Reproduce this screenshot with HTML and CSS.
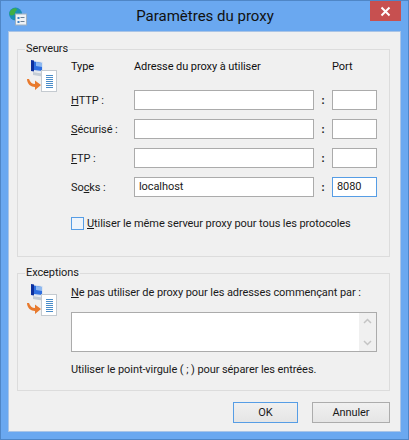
FILE: index.html
```html
<!DOCTYPE html>
<html lang="fr">
<head>
    <meta charset="UTF-8">
    <title>Paramètres du proxy</title>
    <link rel="stylesheet" href="styles.css">
</head>
<body>
<div class="window">
    <div class="titlebar">
        <svg class="app-icon" width="20" height="20" viewBox="0 0 20 20">
            <circle cx="7.5" cy="7" r="6.5" fill="#1c8fb5"/>
            <path d="M3 3c2-2 5-2 6-1 0 2-2 2-2 4s-3 3-5 2c-1-2 0-4 1-5zM9 9c2-1 4 0 4 1-1 2-3 3-4 3-1-1-1-3 0-4z" fill="#3fae45"/>
            <rect x="7.5" y="7" width="11" height="11" fill="#eef2f6" stroke="#9fb0c0"/>
            <path d="M9.5 10h2v2h-2zM9.5 14h2v2h-2z" fill="#3d7fc4"/>
            <path d="M12.500 10.500h4M12.500 14.500h4" stroke="#6b7f94"/>
        </svg>
        <div class="title">Paramètres du proxy</div>
        <div class="close">
            <svg width="11" height="11" viewBox="0 0 11 11"><path d="M1.500 1.500l8 8M9.500 1.500l-8 8" stroke="#fff" stroke-width="2"/></svg>
        </div>
    </div>
    <div class="client">
        <fieldset class="group servers">
            <legend>Serveurs</legend>
            <svg class="net-icon" width="32" height="32" viewBox="0 0 32 32">
                <use href="#net"/>
            </svg>
            <div class="proxy-grid">
                <div class="head">Type</div>
                <div class="head">Adresse du proxy à utiliser</div>
                <div></div>
                <div class="head">Port</div>

                <label><u>H</u>TTP :</label>
                <div class="field"></div>
                <span class="colon">:</span>
                <div class="field"></div>

                <label><u>S</u>écurisé :</label>
                <div class="field"></div>
                <span class="colon">:</span>
                <div class="field"></div>

                <label><u>F</u>TP :</label>
                <div class="field"></div>
                <span class="colon">:</span>
                <div class="field"></div>

                <label>So<u>c</u>ks :</label>
                <div class="field">localhost</div>
                <span class="colon">:</span>
                <div class="field active">8080</div>
            </div>
            <div class="check-row">
                <span class="checkbox"></span>
                <span><u>U</u>tiliser le même serveur proxy pour tous les protocoles</span>
            </div>
        </fieldset>

        <fieldset class="group exceptions">
            <legend>Exceptions</legend>
            <svg class="net-icon" width="32" height="32" viewBox="0 0 32 32">
                <defs>
                    <g id="net">
                        <path d="M5 0l12 2v11L5 11z" fill="#dfe6ee"/>
                        <path d="M5 0l3 .5v11L5 11z" fill="#0c2f9e"/>
                        <path d="M8 1.500l8 1.500v8l-8-1z" fill="#2f6fe0"/>
                        <path d="M10 2l6 1v4l-6-1z" fill="#8db8f0"/>
                        <path d="M7 12l9 1.500v3L7 15z" fill="#c3ccd6"/>
                        <rect x="15.500" y="10.500" width="15" height="21" fill="#fff" stroke="#c4cad0"/>
                        <path d="M20 15.500h7M20 17.500h7M20 19.500h7M20 21.500h7M20 23.500h7M20 25.500h7M20 27.500h7" stroke="#4a8cc8"/>
                        <path d="M1 19c0 5 4 8 8 8v3l6-5-6-4.500V24c-3 0-5-2-6-5z" fill="#e87a2e"/>
                    </g>
                </defs>
                <use href="#net"/>
            </svg>
            <div class="exceptions-body">
                <div class="note"><u>N</u>e pas utiliser de proxy pour les adresses commençant par :</div>
                <div class="textarea">
                    <div class="scrollbar">
                        <svg width="9" height="6" viewBox="0 0 9 6"><path d="M1 5l3.500-3.500L8 5" fill="none" stroke="#c4c4c4" stroke-width="1.500"/></svg>
                        <svg width="9" height="6" viewBox="0 0 9 6"><path d="M1 1l3.500 3.500L8 1" fill="none" stroke="#c4c4c4" stroke-width="1.500"/></svg>
                    </div>
                </div>
                <div class="note">Utiliser le point-virgule ( ; ) pour séparer les entrées.</div>
            </div>
        </fieldset>

        <div class="buttons">
            <div class="btn default">OK</div>
            <div class="btn">Annuler</div>
        </div>
    </div>
</div>
</body>
</html>
```

FILE: styles.css
```css
html, body {
    margin: 0;
    height: 100%;
}
body {
    font-family: Roboto, sans-serif;
    font-size: 11px;
    letter-spacing: -0.08px;
    color: #1a1a1a;
    background-color: #fff;
}
.window {
    box-sizing: border-box;
    width: 409px;
    height: 440px;
    padding: 0 7px 7px;
    display: flex;
    flex-direction: column;
    background-color: #6aa8f0;
    border: 1px solid #4f86c6;
}
.titlebar {
    height: 30px;
    flex: none;
    display: flex;
    align-items: flex-start;
}
.app-icon {
    margin-top: 6px;
    flex: none;
}
.title {
    flex: 1;
    text-align: center;
    font-size: 15px;
    letter-spacing: 0;
    line-height: 20px;
    margin-top: 5px;
    margin-left: 12px;
    color: #111;
}
.close {
    width: 31px;
    height: 20px;
    background-color: #c75050;
    display: flex;
    align-items: center;
    justify-content: center;
    flex: none;
}
.client {
    flex: 1;
    background-color: #f0f0f0;
    border: 1px solid #a9c4e6;
    padding: 9px 10px 0 8px;
    display: flex;
    flex-direction: column;
}
.group {
    margin: 0;
    padding: 0;
    border: 1px solid #dcdcdc;
    min-width: 0;
    display: flex;
    align-items: flex-start;
}
.group legend {
    margin-left: 7px;
    padding: 0 1px;
    line-height: 16px;
}
.servers {
    height: 214px;
    flex-wrap: wrap;
}
.exceptions {
    height: 124px;
    margin-top: 8px;
}
.net-icon {
    flex: none;
    margin: 3px 0 0 8px;
}
.proxy-grid {
    margin: 0 0 0 13px;
    display: grid;
    grid-template-columns: 63px 180px 18px 45px;
    grid-template-rows: 24px 20px 20px 20px 20px;
    row-gap: 9px;
    align-items: center;
}
.head {
    align-self: start;
    line-height: 20px;
    color: #111;
}
.field {
    box-sizing: border-box;
    height: 20px;
    background-color: #fff;
    border: 1px solid #ababab;
    padding-left: 4px;
    line-height: 18px;
}
.field.active {
    border-color: #569de5;
}
.colon {
    text-align: center;
    font-weight: bold;
}
.check-row {
    margin: 20px 0 0 53px;
    width: 100%;
    display: flex;
    align-items: center;
    gap: 3px;
}
.checkbox {
    box-sizing: border-box;
    width: 13px;
    height: 13px;
    background-color: #eef4fb;
    border: 1px solid #569de5;
}
.exceptions-body {
    margin: 3px 0 0 13px;
    width: 306px;
}
.note {
    white-space: nowrap;
    line-height: 18px;
}
.textarea {
    box-sizing: border-box;
    height: 40px;
    margin: 10px 0 9px;
    background-color: #fff;
    border: 1px solid #ababab;
    display: flex;
    justify-content: flex-end;
}
.scrollbar {
    width: 17px;
    background-color: #f0f0f0;
    display: flex;
    flex-direction: column;
    justify-content: space-between;
    align-items: center;
    padding: 5px 0;
}
.buttons {
    margin-top: 11px;
    display: flex;
    justify-content: flex-end;
    gap: 14px;
}
.btn {
    box-sizing: border-box;
    width: 78px;
    height: 21px;
    text-align: center;
    line-height: 19px;
    border: 1px solid #acacac;
    background: linear-gradient(#f0f0f0, #e5e5e5);
}
.btn.default {
    width: 65px;
    border-color: #569de5;
}
```
